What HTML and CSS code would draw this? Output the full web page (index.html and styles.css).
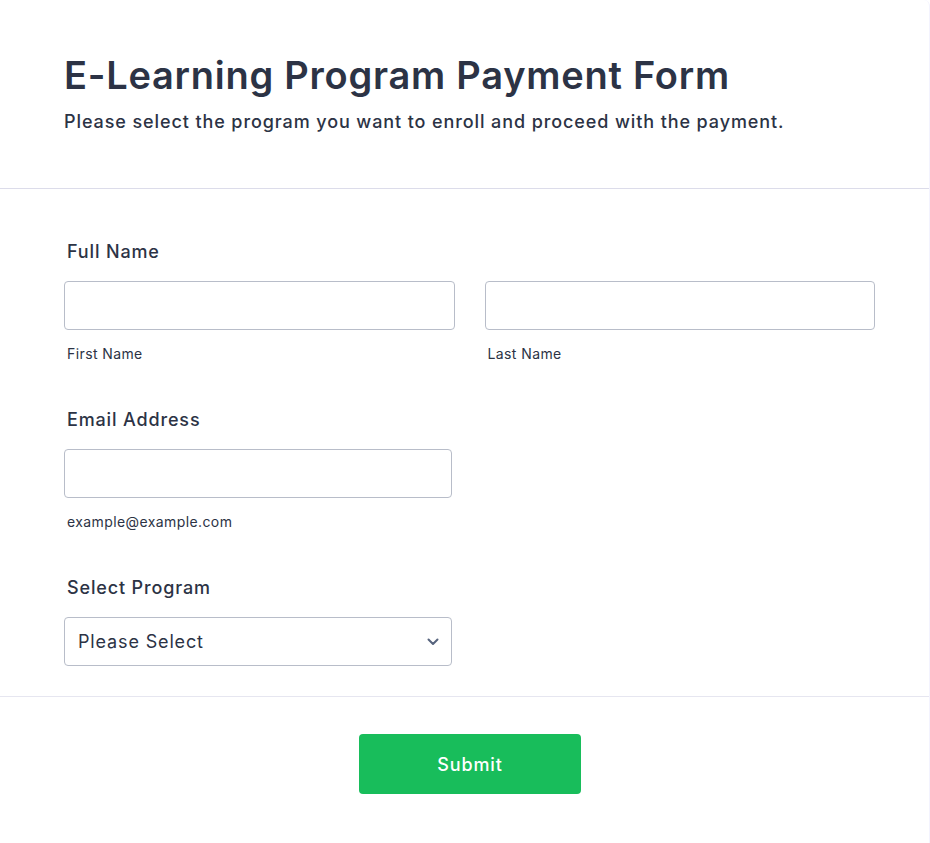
FILE: index.html
```html
<!DOCTYPE html>
<html lang="en">
<head>
<meta charset="UTF-8">
<meta name="viewport" content="width=device-width, initial-scale=1.0">
<title>E-Learning Program Payment Form</title>
<link rel="stylesheet" href="styles.css">
</head>
<body>
  <form class="form-card">
    <!-- header -->
    <div class="form-header">
      <h1 class="form-title">E-Learning Program Payment Form</h1>
      <p class="form-subtitle">Please select the program you want to enroll and proceed with the payment.</p>
    </div>

    <div class="form-body">
      <div class="field">
        <label class="field-label">Full Name</label>
        <div class="name-row">
          <div class="name-col">
            <input class="text-input" type="text" id="first_name">
            <span class="sub-label">First Name</span>
          </div>
          <div class="name-col">
            <input class="text-input" type="text" id="last_name">
            <span class="sub-label">Last Name</span>
          </div>
        </div>
      </div>

      <div class="field">
        <label class="field-label" for="email">Email Address</label>
        <input class="text-input short" type="email" id="email">
        <span class="sub-label">example@example.com</span>
      </div>

      <div class="field">
        <label class="field-label" for="program">Select Program</label>
        <div class="select-wrap short">
          <select class="select-input" id="program">
            <option>Please Select</option>
            <option>Web Development Bootcamp</option>
            <option>Data Science Fundamentals</option>
            <option>UX Design Essentials</option>
          </select>
          <svg class="select-arrow" viewBox="0 0 12 8" fill="none">
            <path d="M1.5 1.5 L6 6 L10.5 1.5" stroke="#57647e" stroke-width="2" stroke-linecap="round" stroke-linejoin="round"/>
          </svg>
        </div>
      </div>
    </div>

    <div class="form-footer">
      <button class="submit-btn" type="submit">Submit</button>
    </div>
  </form>
</body>
</html>
```

FILE: styles.css
```css
body {
  margin: 0;
  background: #fff;
  color: #2c3345;
  font-family: 'Inter', 'Noto Sans', sans-serif;
}
.form-card {
  border-right: 1px solid #f3f3fe;
  border-top-right-radius: 6px;
  min-height: 843px;
  box-sizing: border-box;
}
.form-header {
  padding: 52px 64px 54px 64px;
  border-bottom: 1px solid #dcdcea;
}
.form-title {
  margin: 0;
  font-size: 38px;
  line-height: 46px;
  font-weight: 600;
  letter-spacing: 0.75px;
}
.form-subtitle {
  margin: 12px 0 0 0;
  font-size: 18px;
  line-height: 24px;
  font-weight: 500;
  letter-spacing: 0.9px;
}
.form-body {
  display: flex;
  flex-direction: column;
  gap: 47px;
  padding: 52px 54px 30px 64px;
  border-bottom: 1px solid #e6e6f0;
}
.field {
  display: flex;
  flex-direction: column;
  align-items: flex-start;
}
.field-label {
  font-size: 18px;
  line-height: 22px;
  font-weight: 500;
  letter-spacing: 0.85px;
  margin: 0 0 18px 3px;
}
.name-row {
  display: grid;
  grid-template-columns: 1fr 1fr;
  gap: 30px;
  width: 100%;
}
.name-col {
  display: flex;
  flex-direction: column;
}
.text-input {
  box-sizing: border-box;
  width: 100%;
  height: 49px;
  border: 1px solid #b8bdc9;
  border-radius: 4px;
  background: #fff;
  font-family: inherit;
  font-size: 18px;
  color: #2c3345;
  padding: 0 13px;
  outline: none;
}
.short {
  width: 388px;
}
.sub-label {
  margin: 15px 0 0 3px;
  font-size: 14px;
  line-height: 17px;
  letter-spacing: 0.4px;
  color: #2c3345;
}
.select-wrap {
  position: relative;
}
.select-input {
  appearance: none;
  -webkit-appearance: none;
  box-sizing: border-box;
  width: 100%;
  height: 49px;
  border: 1px solid #b8bdc9;
  border-radius: 4px;
  background: #fff;
  font-family: inherit;
  font-size: 18px;
  letter-spacing: 0.85px;
  color: #2c3345;
  padding: 0 40px 0 13px;
  outline: none;
}
.select-arrow {
  position: absolute;
  right: 13px;
  top: 21px;
  width: 12px;
  height: 8px;
  pointer-events: none;
}
.form-footer {
  display: flex;
  justify-content: center;
  padding: 37px 0 40px 0;
}
.submit-btn {
  width: 222px;
  height: 60px;
  border: none;
  border-radius: 4px;
  background: #18bd5b;
  color: #fff;
  font-family: inherit;
  font-size: 18px;
  font-weight: 500;
  letter-spacing: 0.9px;
  cursor: pointer;
  margin-left: 11px;
  padding-top: 2px;
}
```
